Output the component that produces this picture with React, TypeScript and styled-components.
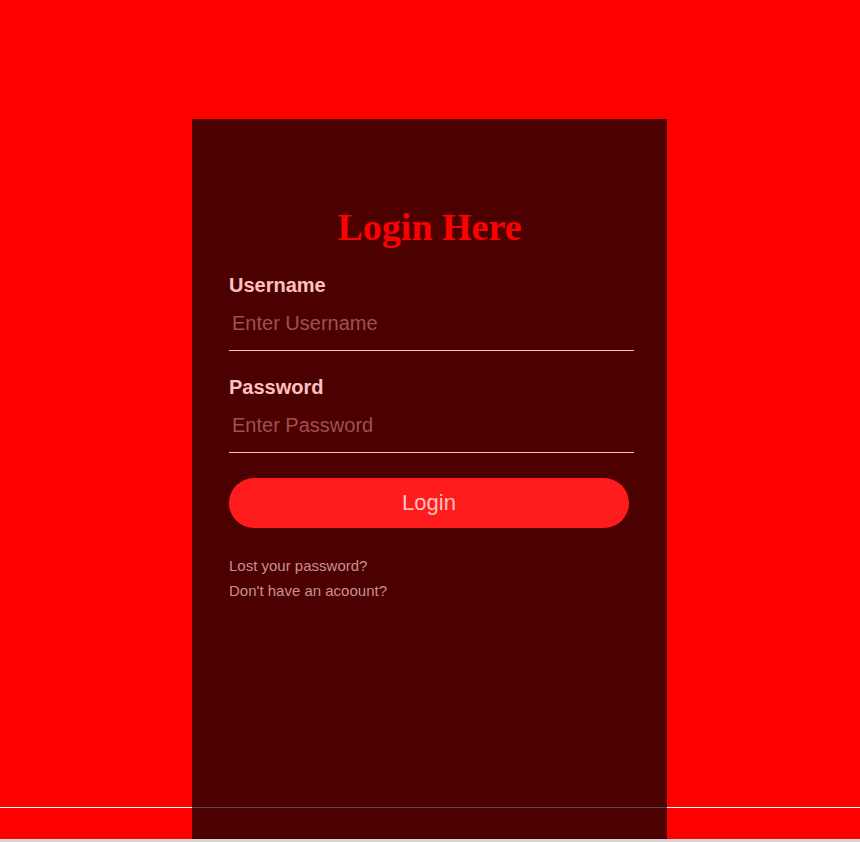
import React from "react";
import styled, { createGlobalStyle } from "styled-components";

const Global = createGlobalStyle`
  html, body {
    margin: 0;
    padding: 0;
    background: #d6d6d6;
  }
  body {
    font-family: "Liberation Sans", Arial, sans-serif;
  }
  * { box-sizing: border-box; }
`;

const Page = styled.div`
  height: 839px;
  padding: 119px 0 0 192px;
  display: flex;
  align-items: stretch;
  background: linear-gradient(
    to bottom,
    #ff0000 0,
    #ff0000 807px,
    #ffffff 807px,
    #ffffff 808px,
    #ff0000 808px
  );
  overflow: hidden;
`;

const Panel = styled.div`
  width: 475px;
  background: rgba(0, 0, 0, 0.7);
  padding: 87px 37px 0 37px;
  display: flex;
  flex-direction: column;
`;

const Title = styled.h1`
  margin: 0 0 26px;
  font-family: "Liberation Serif", "Times New Roman", serif;
  font-weight: bold;
  font-size: 38px;
  line-height: 42px;
  color: #ff0000;
  text-align: center;
`;

const Field = styled.div`
  display: flex;
  flex-direction: column;
  margin-bottom: 25px;
`;

const Label = styled.label`
  font-size: 20px;
  font-weight: bold;
  line-height: 23px;
  color: #ffc0c0;
`;

const Input = styled.input`
  width: 405px;
  flex: none;
  border: none;
  border-bottom: 1px solid #ffc0b8;
  background: transparent;
  outline: none;
  padding: 15px 3px 15px 3px;
  font-family: "Liberation Sans", Arial, sans-serif;
  font-size: 20px;
  line-height: 23px;
  height: 54px;
  color: #ffc0c0;
  &::placeholder {
    color: #a25050;
  }
`;

const Button = styled.button`
  width: 400px;
  height: 50px;
  border: none;
  border-radius: 25px;
  background: #ff1c1c;
  color: #ffc0c0;
  font-family: "Liberation Sans", Arial, sans-serif;
  font-size: 22px;
  padding: 0;
  cursor: pointer;
  margin-bottom: 25px;
`;

const Link = styled.a`
  display: block;
  font-size: 15px;
  line-height: 25px;
  color: #c89090;
  text-decoration: none;
`;

export default function App() {
  return (
    <>
      <Global />
      <Page>
        <Panel>
          <Title>Login Here</Title>
          <Field>
            <Label htmlFor="u">Username</Label>
            <Input id="u" type="text" placeholder="Enter Username" />
          </Field>
          <Field>
            <Label htmlFor="p">Password</Label>
            <Input id="p" type="password" placeholder="Enter Password" />
          </Field>
          <Button>Login</Button>
          <Link href="#">Lost your password?</Link>
          <Link href="#">Don't have an acoount?</Link>
        </Panel>
      </Page>
    </>
  );
}
